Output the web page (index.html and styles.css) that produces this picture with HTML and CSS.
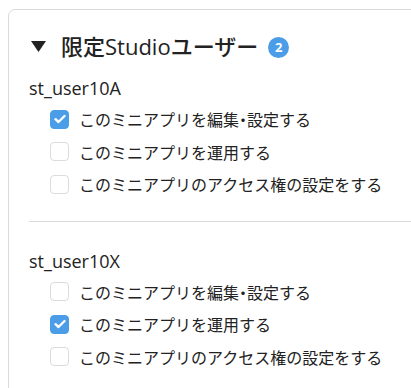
FILE: index.html
```html
<!DOCTYPE html>
<html lang="ja">
<head>
<meta charset="utf-8">
<link rel="stylesheet" href="styles.css">
</head>
<body>
<div class="card">
  <div class="heading">
    <svg class="caret" width="15" height="11" viewBox="0 0 15 11"><polygon points="0,0 15,0 7.5,11" fill="#222"/></svg>
    <span class="title">限定Studioユーザー</span>
    <span class="badge">2</span>
  </div>
  <div class="user first">
    <div class="name">st_user10A</div>
    <ul class="perms">
      <li><span class="box checked"><svg width="12" height="10" viewBox="0 0 12 10"><polyline points="1.5,5.2 4.5,8 10.5,2" fill="none" stroke="#fff" stroke-width="2.4" stroke-linecap="round" stroke-linejoin="round"/></svg></span>このミニアプリを編集<span class="dot">・</span>設定する</li>
      <li><span class="box"></span>このミニアプリを運用する</li>
      <li><span class="box"></span>このミニアプリのアクセス権の設定をする</li>
    </ul>
  </div>
  <hr class="divider">
  <div class="user second">
    <div class="name">st_user10X</div>
    <ul class="perms">
      <li><span class="box"></span>このミニアプリを編集<span class="dot">・</span>設定する</li>
      <li><span class="box checked"><svg width="12" height="10" viewBox="0 0 12 10"><polyline points="1.5,5.2 4.5,8 10.5,2" fill="none" stroke="#fff" stroke-width="2.4" stroke-linecap="round" stroke-linejoin="round"/></svg></span>このミニアプリを運用する</li>
      <li><span class="box"></span>このミニアプリのアクセス権の設定をする</li>
    </ul>
  </div>
</div>
</body>
</html>
```
FILE: styles.css
```css
html, body {
  margin: 0;
  padding: 0;
  background: #fff;
  overflow: hidden;
}
body {
  padding: 9px 0 0 8px;
  font-family: "Open Sans", "Noto Sans CJK JP", sans-serif;
  color: #222;
}
.card {
  width: 470px;
  border: 1px solid #dadada;
  border-radius: 7px;
  padding: 20px 0 40px 20px;
  box-sizing: border-box;
}
.heading {
  display: flex;
  align-items: center;
  height: 32px;
}
.caret {
  margin-left: 2px;
  margin-right: 15px;
  flex: none;
}
.title {
  font-size: 22px;
  font-weight: 500;
  line-height: 32px;
  font-family: "Open Sans", "Noto Sans CJK JP", sans-serif;
}
.badge {
  margin-left: 10px;
  width: 21px;
  height: 21px;
  border-radius: 50%;
  background: #4a9de6;
  color: #fff;
  font-size: 13px;
  font-weight: 700;
  line-height: 21px;
  text-align: center;
  margin-top: 2px;
}
.user.first {
  margin-top: 13px;
}
.user.second {
  margin-top: 26px;
}
.name {
  font-size: 18px;
  font-weight: 500;
  line-height: 26px;
}
.perms {
  list-style: none;
  margin: 2px 0 0 0;
  padding: 0 0 0 21px;
}
.perms li {
  display: flex;
  align-items: center;
  height: 32.5px;
  font-size: 16px;
  font-family: "Noto Sans CJK JP", sans-serif;
  color: #222;
}
.dot {
  font-feature-settings: "halt" 1;
}
.box {
  flex: none;
  width: 19px;
  height: 19px;
  box-sizing: border-box;
  border: 1px solid #dcdcdc;
  border-radius: 4px;
  margin-right: 10px;
  display: flex;
  align-items: center;
  justify-content: center;
  background: #fff;
}
.box.checked {
  background: #4a9de6;
  border-color: #4a9de6;
}
.divider {
  border: none;
  border-top: 1px solid #dcdcdc;
  margin: 20px 0 0 0;
}
```
